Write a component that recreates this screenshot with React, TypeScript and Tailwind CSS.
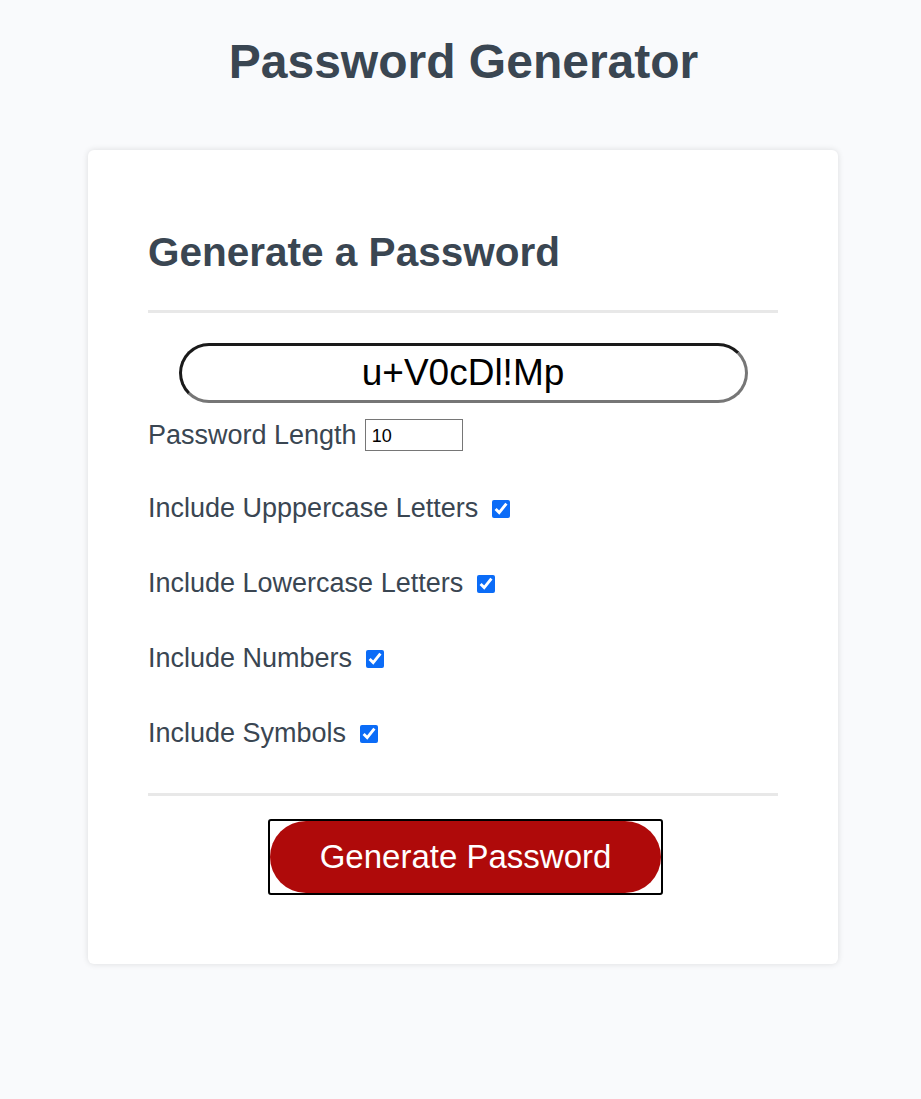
export default function App() {
  const options = [
    'Include Upppercase Letters',
    'Include Lowercase Letters',
    'Include Numbers',
    'Include Symbols',
  ];

  return (
    <div className="min-h-[1099px] bg-[#f9fafc] text-[#3a4652] font-['Liberation_Sans',Arial,sans-serif]">
      <h1 className="pt-[32px] pl-[6px] text-center text-[48px] font-bold leading-[60px]">Password Generator</h1>

      <div className="mx-[88px] mt-[58px] w-[750px] rounded-md bg-white px-[60px] pt-[80px] pb-[69px] shadow-[0_0_6px_rgba(0,0,0,0.12)]">
        <h2 className="text-[40.5px] font-bold leading-[44px]">Generate a Password</h2>
        <div className="mt-[36px] h-[3px] bg-[#e8e8e8]" />

        <div className="mt-[30px] flex justify-center">
          <input
            readOnly
            value="u+V0cDl!Mp"
            className="h-[60px] w-[569px] rounded-full border-[3px] border-t-[#1a1a1a] border-l-[#1a1a1a] border-b-[#767676] border-r-[#767676] bg-white text-center text-[37px] text-black outline-none"
          />
        </div>

        <div className="mt-[16px] flex h-[32px] items-center text-[27px]">
          <span>Password Length</span>
          <input
            type="number"
            readOnly
            value={10}
            className="ml-[8px] h-[32px] w-[98px] border border-[#767676] px-[6px] pt-[2px] text-[18px] text-black"
          />
        </div>

        <div className="mt-[20px] flex flex-col">
          {options.map((label) => (
            <label key={label} className="flex h-[75px] items-center text-[27px]">
              <span>{label}</span>
              <input type="checkbox" defaultChecked className="ml-[14px] h-[18px] w-[18px] accent-[#0b6cf7]" />
            </label>
          ))}
        </div>

        <div className="mt-[22px] h-[3px] bg-[#e8e8e8]" />

        <div className="mt-[23px] flex justify-center pl-[5px]">
          <div className="rounded-[3px] border-2 border-black">
            <button className="h-[72px] w-[391px] rounded-full bg-[#af0a0a] text-[33px] text-white">
              Generate Password
            </button>
          </div>
        </div>
      </div>
    </div>
  );
}
